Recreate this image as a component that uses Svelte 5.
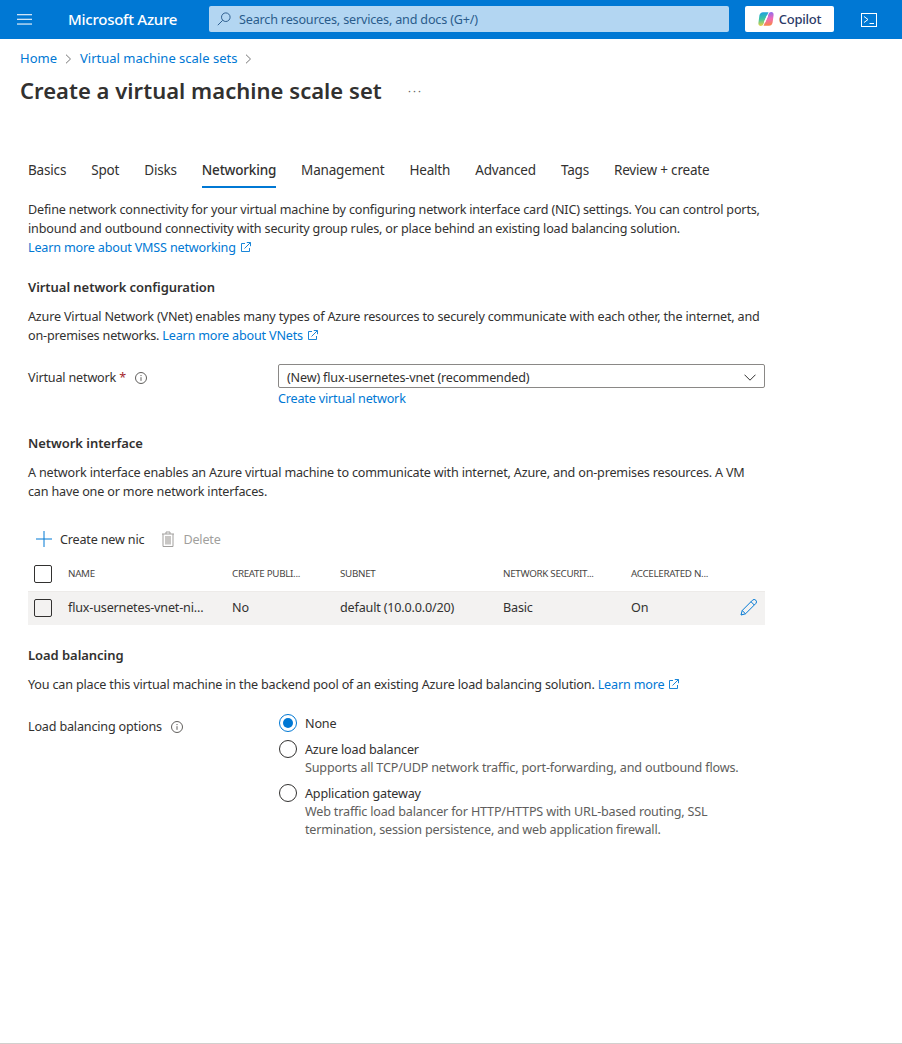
<script>
  const tabs = ['Basics', 'Spot', 'Disks', 'Networking', 'Management', 'Health', 'Advanced', 'Tags', 'Review + create'];
  const active = 'Networking';
</script>

{#snippet extLink()}
  <svg class="ext" width="10" height="10" viewBox="0 0 10 10" fill="none" stroke="currentColor" stroke-width="0.9">
    <path d="M4 1.500H.5v8h8V6" />
    <path d="M3.500 6.500 9.300.7M5.800.5h3.700v3.700" />
  </svg>
{/snippet}

{#snippet info()}
  <svg class="info" width="12" height="12" viewBox="0 0 12 12" fill="none">
    <circle cx="6" cy="6" r="5.500" stroke="#605e5c" />
    <path d="M6 5.200v3.600" stroke="#605e5c" />
    <path d="M6 3v1.100" stroke="#605e5c" />
  </svg>
{/snippet}

<div class="page">
  <header class="topbar">
    <svg class="menu" width="15" height="11" viewBox="0 0 15 11" fill="#cfe4f6">
      <rect y="0" width="15" height="1.300" />
      <rect y="4.700" width="15" height="1.300" />
      <rect y="9.400" width="15" height="1.300" />
    </svg>
    <div class="brand">Microsoft Azure</div>
    <div class="search">
      <svg width="14" height="14" viewBox="0 0 14 14" fill="none" stroke="#2f5f8f" stroke-width="1">
        <circle cx="8.800" cy="5.200" r="4.300" />
        <path d="M5.700 8.300.8 13.200" />
      </svg>
      <span>Search resources, services, and docs (G+/)</span>
    </div>
    <div class="copilot">
      <svg width="16" height="16" viewBox="0 0 16 16" fill="none">
        <defs>
          <linearGradient id="cpA" x1="0.3" y1="0" x2="0.4" y2="1">
            <stop offset="0" stop-color="#1b9de2" />
            <stop offset="0.5" stop-color="#3fc6a0" />
            <stop offset="1" stop-color="#f5d33c" />
          </linearGradient>
          <linearGradient id="cpB" x1="0.6" y1="0" x2="0.7" y2="1">
            <stop offset="0" stop-color="#8b6cf0" />
            <stop offset="0.5" stop-color="#f36ab5" />
            <stop offset="1" stop-color="#f7893b" />
          </linearGradient>
        </defs>
        <path d="M5 1.200h5.500L7 9l-1.500 3.800C5 14.200 4 15 2.800 15 1.200 15 .2 13.800.4 12L1.400 4.500C1.700 2.500 3.200 1.200 5 1.200Z" fill="url(#cpA)" />
        <path d="M11 14.800H5.500L9 7l1.500-3.800C11 1.800 12 1 13.200 1c1.600 0 2.600 1.200 2.400 3l-1 7.500c-.3 2-1.800 3.300-3.600 3.300Z" fill="url(#cpB)" />
        <path d="M9.300 5 6.700 11" stroke="#fff" stroke-width="1.500" stroke-linecap="round" />
      </svg>
      <span>Copilot</span>
    </div>
    <svg class="shell" width="16" height="14" viewBox="0 0 16 14" fill="none" stroke="#fff">
      <rect x="0.5" y="0.5" width="15" height="13" />
      <path d="M3 3.500 7 6.500 3 9.500M8.500 10.500H13" />
    </svg>
  </header>

  <nav class="crumbs">
    <a href="#home">Home</a>
    <svg width="7" height="10" viewBox="0 0 7 10" fill="none" stroke="#777"><path d="m1 .7 4.500 4.300L1 9.300" /></svg>
    <a href="#vmss">Virtual machine scale sets</a>
    <svg width="7" height="10" viewBox="0 0 7 10" fill="none" stroke="#777"><path d="m1 .7 4.500 4.300L1 9.300" /></svg>
  </nav>

  <div class="title-row">
    <h1>Create a virtual machine scale set</h1>
    <span class="more">···</span>
  </div>

  <main class="content">
    <div class="tabs">
      {#each tabs as tab}
        <div class="tab" class:active={tab === active}>{tab}</div>
      {/each}
    </div>

    <p class="intro">
      Define network connectivity for your virtual machine by configuring network interface card (NIC) settings. You can control ports, inbound and outbound connectivity with security group rules, or place behind an existing load balancing solution.<br />
      <a href="#learn">Learn more about VMSS networking {@render extLink()}</a>
    </p>

    <h2 class="first">Virtual network configuration</h2>
    <p>
      Azure Virtual Network (VNet) enables many types of Azure resources to securely communicate with each other, the internet, and on-premises networks. <a href="#vnets">Learn more about VNets {@render extLink()}</a>
    </p>

    <div class="field vnet">
      <div class="label">Virtual network <span class="req">*</span> {@render info()}</div>
      <div class="control">
        <div class="select">
          <span>(New) flux-usernetes-vnet (recommended)</span>
          <svg width="12" height="7" viewBox="0 0 12 7" fill="none" stroke="#323130"><path d="m.5.7 5.500 5.500L11.500.7" /></svg>
        </div>
        <a href="#create">Create virtual network</a>
      </div>
    </div>

    <h2 class="nic-head">Network interface</h2>
    <p>A network interface enables an Azure virtual machine to communicate with internet, Azure, and on-premises resources. A VM can have one or more network interfaces.</p>

    <div class="toolbar">
      <button type="button">
        <svg width="16" height="16" viewBox="0 0 16 16" stroke="#0078d4"><path d="M8 0v16M0 8h16" /></svg>
        Create new nic
      </button>
      <button type="button" class="off">
        <svg width="14" height="16" viewBox="0 0 14 16" fill="none" stroke="#a19f9d">
          <path d="M1 3h12M5 3V1h4v2M2 3v12.500h10V3" />
          <rect x="4" y="5" width="6" height="8.500" fill="#c8c6c4" stroke="none" />
        </svg>
        Delete
      </button>
    </div>

    <div class="grid head">
      <span class="check"></span>
      <span>NAME</span>
      <span>CREATE PUBLI...</span>
      <span>SUBNET</span>
      <span>NETWORK SECURIT...</span>
      <span>ACCELERATED N...</span>
      <span></span>
    </div>
    <div class="grid row">
      <span class="check"></span>
      <span>flux-usernetes-vnet-ni...</span>
      <span>No</span>
      <span>default (10.0.0.0/20)</span>
      <span>Basic</span>
      <span>On</span>
      <svg width="17" height="17" viewBox="0 0 17 17" fill="none" stroke="#0078d4">
        <path d="M1 16l1.200-4.500L12.500 1.200a1.800 1.800 0 0 1 3.300 3.300L5.500 14.800 1 16ZM2.200 11.500l3.300 3.300M11 2.700l3.300 3.300" />
      </svg>
    </div>

    <h2 class="lb-head">Load balancing</h2>
    <p>You can place this virtual machine in the backend pool of an existing Azure load balancing solution. <a href="#more">Learn more {@render extLink()}</a></p>

    <div class="field lb">
      <div class="label lb-label">Load balancing options {@render info()}</div>
      <div class="radios">
        <div class="radio on"><span class="dot"></span><div>None</div></div>
        <div class="radio"><span class="dot"></span><div>Azure load balancer<small>Supports all TCP/UDP network traffic, port-forwarding, and outbound flows.</small></div></div>
        <div class="radio"><span class="dot"></span><div>Application gateway<small>Web traffic load balancer for HTTP/HTTPS with URL-based routing, SSL termination, session persistence, and web application firewall.</small></div></div>
      </div>
    </div>
  </main>
  <div class="footer-line"></div>
</div>

<style>
  :global(body) {
    margin: 0;
    background: #fff;
  }

  .page {
    height: 1044px;
    overflow: hidden;
    position: relative;
    font-family: "Noto Sans", "Open Sans", sans-serif;
    font-size: 12.6px;
    letter-spacing: -0.18px;
    line-height: 19px;
    color: #323130;
  }

  a {
    color: #0078d4;
    text-decoration: none;
  }

  /* top bar */
  .topbar {
    height: 39px;
    background: #0078d4;
    display: flex;
    align-items: center;
  }

  .menu {
    margin-left: 17px;
  }

  .brand {
    margin-left: 36px;
    width: 141px;
    color: #fff;
    font-size: 15px;
    font-weight: 500;
    letter-spacing: -0.25px;
  }

  .search {
    width: 520px;
    height: 26px;
    box-sizing: border-box;
    background: #b3d6f2;
    border-radius: 2px;
    display: flex;
    align-items: center;
    gap: 8px;
    padding-left: 8px;
    color: #2a5c8c;
    margin-top: -1px;
  }

  .copilot {
    margin-left: 16px;
    margin-top: -1px;
    width: 89px;
    height: 26px;
    background: #fff;
    border-radius: 2px;
    display: flex;
    align-items: center;
    justify-content: center;
    gap: 5px;
    color: #2b3a67;
    font-size: 13px;
    font-weight: 500;
    letter-spacing: -0.25px;
  }

  .shell {
    margin-left: 27px;
  }

  /* breadcrumb and title */
  .crumbs {
    display: flex;
    align-items: center;
    gap: 8px;
    padding: 10px 0 0 20px;
    font-size: 13px;
    letter-spacing: 0;
  }

  .title-row {
    display: flex;
    align-items: center;
    padding: 4px 0 0 20px;
    height: 36px;
  }

  h1 {
    margin: 0;
    font-size: 22px;
    font-weight: 600;
    width: 388px;
    letter-spacing: 0.03px;
  }

  .more {
    color: #605e5c;
    font-size: 11px;
    letter-spacing: 2px;
  }

  /* body */
  .content {
    width: 737px;
    padding: 0 0 0 28px;
  }

  .tabs {
    display: flex;
    gap: 25px;
    margin-top: 51px;
  }

  .tab {
    height: 29px;
    box-sizing: border-box;
    padding-top: 2px;
    border-bottom: 2px solid transparent;
    font-size: 13.5px;
    letter-spacing: -0.18px;
  }

  .tab.active {
    font-weight: 500;
    letter-spacing: -0.2px;
    border-bottom-color: #0078d4;
  }

  p {
    margin: 0;
  }

  .intro {
    margin-top: 12px;
  }

  h2 {
    margin: 0 0 10px;
    font-size: 13px;
    font-weight: 600;
    line-height: 19px;
    letter-spacing: -0.05px;
  }

  .first {
    margin-top: 21px;
  }

  .nic-head {
    margin-top: 26px;
  }

  .lb-head {
    margin-top: 21px;
    margin-bottom: 10px;
  }

  .ext {
    margin-left: 2px;
  }

  .info {
    margin-left: 6px;
    vertical-align: -2px;
  }

  .field {
    display: flex;
  }

  .label {
    width: 250px;
    flex: none;
  }

  .req {
    color: #a4262c;
  }

  .vnet {
    margin-top: 19px;
  }

  .vnet .label {
    padding-top: 4px;
  }

  .control {
    flex: 1;
  }

  .select {
    height: 24px;
    box-sizing: border-box;
    border: 1px solid #8a8886;
    border-radius: 2px;
    display: flex;
    align-items: center;
    justify-content: space-between;
    padding: 2px 8px 0;
  }

  .control a {
    display: block;
    margin-top: 1px;
  }

  .toolbar {
    display: flex;
    gap: 17px;
    margin-top: 28px;
    padding-left: 8px;
    height: 20px;
  }

  button {
    all: unset;
    display: flex;
    align-items: center;
    gap: 8px;
  }

  .off {
    color: #a19f9d;
  }

  .grid {
    display: grid;
    grid-template-columns: 40px 164px 108px 163px 128px 1fr 25px;
    align-items: center;
    box-sizing: border-box;
  }

  .head {
    height: 35px;
    margin-top: 8px;
    padding-bottom: 1px;
    font-size: 9.8px;
    letter-spacing: -0.3px;
    color: #484644;
    border-bottom: 1px solid #edebe9;
  }

  .row {
    height: 33px;
    padding-bottom: 2px;
    background: #f3f2f1;
  }

  .check {
    width: 18px;
    height: 18px;
    box-sizing: border-box;
    border: 1px solid #323130;
    border-radius: 2px;
    margin-left: 6px;
  }

  .lb {
    margin-top: 20px;
  }

  .lb-label {
    padding-top: 3px;
  }

  .radios {
    display: flex;
    flex-direction: column;
    gap: 7px;
  }

  .radio {
    display: flex;
    gap: 8px;
  }

  .dot {
    width: 18px;
    height: 18px;
    box-sizing: border-box;
    border: 1px solid #323130;
    border-radius: 50%;
    flex: none;
    margin-left: 1px;
    position: relative;
  }

  .radio.on .dot {
    border-color: #0078d4;
  }

  .radio.on .dot::after {
    content: '';
    position: absolute;
    inset: 3px;
    border-radius: 50%;
    background: #0078d4;
  }

  small {
    display: block;
    font-size: inherit;
    color: #605e5c;
    line-height: 18px;
    width: 440px;
  }

  .footer-line {
    position: absolute;
    left: 0;
    right: 0;
    bottom: 0;
    height: 1px;
    background: #d2d0ce;
  }
</style>
